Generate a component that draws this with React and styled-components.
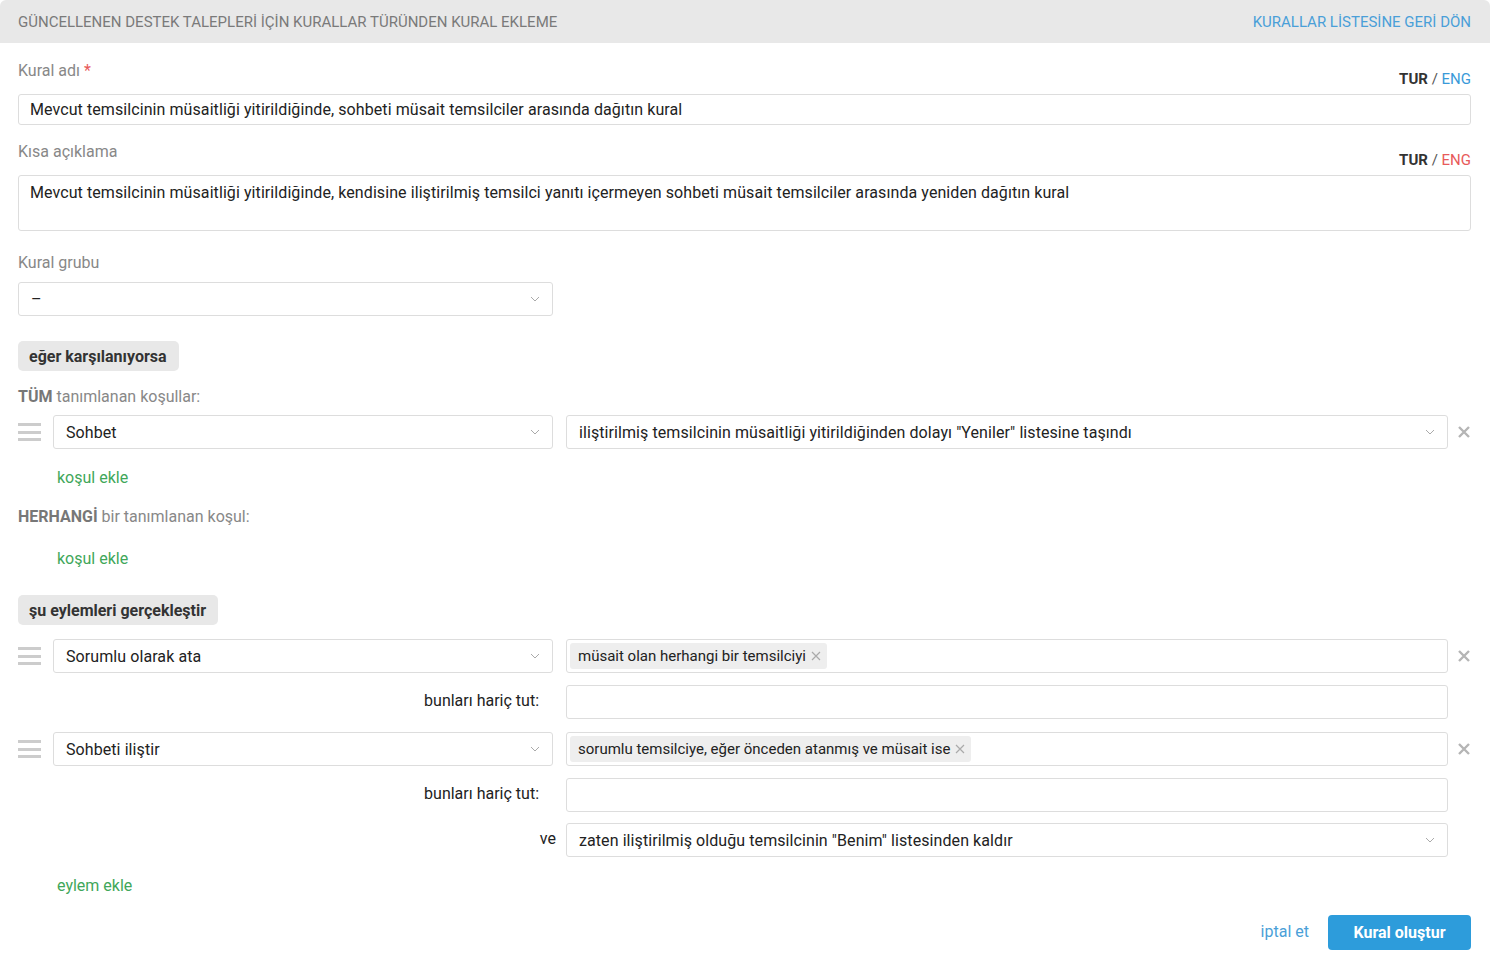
import React from 'react'
import styled, { createGlobalStyle } from 'styled-components'

const GlobalStyle = createGlobalStyle`
  body {
    margin: 0;
    background: #fff;
    font-family: Roboto, "Noto Sans", Arial, sans-serif;
  }
  * { box-sizing: border-box; }
`

const Header = styled.div`
  height: 43px;
  background: #e8e8e8;
  border-radius: 6px 6px 0 0;
  display: flex;
  align-items: center;
  justify-content: space-between;
  padding: 0 19px 0 18px;
  font-size: 15px;
`
const Title = styled.div`
  color: #7a7a7a;
  padding-top: 1px;
`
const BackLink = styled.a`
  color: #4a9fd8;
  text-decoration: none;
  cursor: pointer;
  padding-top: 1px;
`

const Body = styled.div`
  padding: 0 19px 0 18px;
  display: flex;
  flex-direction: column;
`

const LabelRow = styled.div`
  height: 34px;
  margin-top: ${p => p.$mt}px;
  display: flex;
  justify-content: space-between;
`
const Label = styled.div`
  font-size: 16px;
  line-height: 20px;
  color: #888;
  margin-top: ${p => p.$mt || 0}px;
  margin-bottom: ${p => p.$mb || 0}px;
`
const Star = styled.span`
  color: #e85a5a;
`
const Lang = styled.div`
  align-self: flex-end;
  padding-bottom: 7px;
  font-size: 15px;
  line-height: 16px;
  color: #555;
`
const LangCur = styled.b`
  color: #333;
`
const LangAlt = styled.span`
  color: ${p => (p.$missing ? '#e85a5a' : '#3a9ad9')};
`

const TextBox = styled.div`
  height: ${p => p.$h || 34}px;
  border: 1px solid #ddd;
  border-radius: 3px;
  padding: ${p => (p.$multi ? '7px 11px' : '0 11px')};
  display: flex;
  align-items: ${p => (p.$multi ? 'flex-start' : 'center')};
  font-size: 16px;
  line-height: 20px;
  letter-spacing: 0.08px;
  color: #222;
  background: #fff;
`

const SelectBox = styled.div`
  width: ${p => p.$w || 'auto'};
  flex: ${p => (p.$w ? 'none' : '1')};
  height: 34px;
  border: 1px solid #ddd;
  border-radius: 3px;
  padding: 0 12px 0 12px;
  display: flex;
  align-items: center;
  justify-content: space-between;
  font-size: 16px;
  letter-spacing: 0.08px;
  color: #222;
  background: #fff;
`

const Chevron = () => (
  <svg width="10" height="6" viewBox="0 0 10 6">
    <path d="M1 1 L5 5 L9 1" fill="none" stroke="#aaa" strokeWidth="1" />
  </svg>
)

const Select = ({ children, w }) => (
  <SelectBox $w={w}>
    <span>{children}</span>
    <Chevron />
  </SelectBox>
)

const SectionTag = styled.div`
  align-self: flex-start;
  margin-top: ${p => p.$mt}px;
  height: 30px;
  padding: 0 12px 0 11px;
  display: flex;
  align-items: center;
  background: #e8e8e8;
  border-radius: 5px;
  font-size: 16px;
  font-weight: 700;
  color: #333;
`

const Caption = styled.div`
  margin-top: ${p => p.$mt}px;
  font-size: 16px;
  line-height: 20px;
  color: #888;
  b { color: #777; }
`

const AddLink = styled.a`
  margin-top: ${p => p.$mt}px;
  padding-left: 39px;
  font-size: 16px;
  line-height: 20px;
  color: #3fa75a;
  cursor: pointer;
`

const Row = styled.div`
  margin-top: ${p => p.$mt}px;
  display: flex;
  align-items: center;
`
const Handle = styled.div`
  width: 23px;
  height: 18px;
  margin-right: 12px;
  display: flex;
  flex-direction: column;
  justify-content: space-between;
  span {
    display: block;
    height: 3px;
    background: #ccc;
  }
`
const Spacer = styled.div`
  width: ${p => p.$w || 535}px;
  padding-right: ${p => p.$pr}px;
  text-align: right;
  font-size: 16px;
  color: #222;
  flex: none;
  margin-top: -4px;
`
const Gap = styled.div`
  width: ${p => p.$w || 13}px;
  flex: none;
`
const CloseCell = styled.div`
  width: 23px;
  flex: none;
  display: flex;
  justify-content: flex-end;
`

const Close = () => (
  <svg width="14" height="14" viewBox="0 0 14 14">
    <path d="M2 2 L12 12 M12 2 L2 12" stroke="#b5b5b5" strokeWidth="2.4" />
  </svg>
)

const TagInput = styled.div`
  flex: 1;
  height: 34px;
  border: 1px solid #ddd;
  border-radius: 3px;
  padding: 0 3px;
  display: flex;
  align-items: center;
  background: #fff;
`
const Chip = styled.div`
  height: 26px;
  padding: 0 6px 0 8px;
  display: flex;
  align-items: center;
  gap: 5px;
  background: #eee;
  border-radius: 3px;
  font-size: 15px;
  color: #222;
`
const ChipX = () => (
  <svg width="10" height="10" viewBox="0 0 10 10">
    <path d="M1 1 L9 9 M9 1 L1 9" stroke="#aaa" strokeWidth="1.2" />
  </svg>
)

const EmptyInput = styled.div`
  flex: 1;
  height: 34px;
  border: 1px solid #ddd;
  border-radius: 3px;
  background: #fff;
`

const Footer = styled.div`
  margin-top: 19px;
  display: flex;
  justify-content: flex-end;
  align-items: center;
  gap: 19px;
`
const Cancel = styled.a`
  font-size: 16px;
  color: #4a9fd8;
  cursor: pointer;
  margin-bottom: 2px;
`
const Primary = styled.button`
  width: 143px;
  height: 35px;
  border: none;
  border-radius: 4px;
  background: #2d9cdb;
  color: #fff;
  font-family: inherit;
  font-size: 16px;
  font-weight: 700;
  cursor: pointer;
`

const DragHandle = () => (
  <Handle>
    <span />
    <span />
    <span />
  </Handle>
)

const App = () => {
  return (
    <>
      <GlobalStyle />
      <Header>
        <Title>GÜNCELLENEN DESTEK TALEPLERİ İÇİN KURALLAR TÜRÜNDEN KURAL EKLEME</Title>
        <BackLink>KURALLAR LİSTESİNE GERİ DÖN</BackLink>
      </Header>
      <Body>
        <LabelRow $mt={17}>
          <Label $mt={1}>Kural adı <Star>*</Star></Label>
          <Lang><LangCur>TUR</LangCur> / <LangAlt>ENG</LangAlt></Lang>
        </LabelRow>
        <TextBox $h={31}>Mevcut temsilcinin müsaitliği yitirildiğinde, sohbeti müsait temsilciler arasında dağıtın kural</TextBox>

        <LabelRow $mt={16}>
          <Label $mt={1}>Kısa açıklama</Label>
          <Lang><LangCur>TUR</LangCur> / <LangAlt $missing>ENG</LangAlt></Lang>
        </LabelRow>
        <TextBox $h={56} $multi>Mevcut temsilcinin müsaitliği yitirildiğinde, kendisine iliştirilmiş temsilci yanıtı içermeyen sohbeti müsait temsilciler arasında yeniden dağıtın kural</TextBox>

        <Label $mt={22} $mb={9}>Kural grubu</Label>
        <Select w="535px">–</Select>

        <SectionTag $mt={25}>eğer karşılanıyorsa</SectionTag>
        <Caption $mt={16}><b>TÜM</b> tanımlanan koşullar:</Caption>
        <Row $mt={8}>
          <DragHandle />
          <Select w="500px">Sohbet</Select>
          <Gap />
          <Select>iliştirilmiş temsilcinin müsaitliği yitirildiğinden dolayı "Yeniler" listesine taşındı</Select>
          <CloseCell><Close /></CloseCell>
        </Row>
        <AddLink $mt={19}>koşul ekle</AddLink>
        <Caption $mt={19}><b>HERHANGİ</b> bir tanımlanan koşul:</Caption>
        <AddLink $mt={22}>koşul ekle</AddLink>

        <SectionTag $mt={26}>şu eylemleri gerçekleştir</SectionTag>
        <Row $mt={14}>
          <DragHandle />
          <Select w="500px">Sorumlu olarak ata</Select>
          <Gap />
          <TagInput>
            <Chip>müsait olan herhangi bir temsilciyi <ChipX /></Chip>
          </TagInput>
          <CloseCell><Close /></CloseCell>
        </Row>
        <Row $mt={12}>
          <Spacer $pr={14}>bunları hariç tut:</Spacer>
          <Gap />
          <EmptyInput />
          <CloseCell />
        </Row>
        <Row $mt={13}>
          <DragHandle />
          <Select w="500px">Sohbeti iliştir</Select>
          <Gap />
          <TagInput>
            <Chip>sorumlu temsilciye, eğer önceden atanmış ve müsait ise <ChipX /></Chip>
          </TagInput>
          <CloseCell><Close /></CloseCell>
        </Row>
        <Row $mt={12}>
          <Spacer $pr={14}>bunları hariç tut:</Spacer>
          <Gap />
          <EmptyInput />
          <CloseCell />
        </Row>
        <Row $mt={11}>
          <Spacer $w={538} $pr={0}>ve</Spacer>
          <Gap $w={10} />
          <Select>zaten iliştirilmiş olduğu temsilcinin "Benim" listesinden kaldır</Select>
          <CloseCell />
        </Row>
        <AddLink $mt={19}>eylem ekle</AddLink>

        <Footer>
          <Cancel>iptal et</Cancel>
          <Primary>Kural oluştur</Primary>
        </Footer>
      </Body>
    </>
  )
}

export default App
